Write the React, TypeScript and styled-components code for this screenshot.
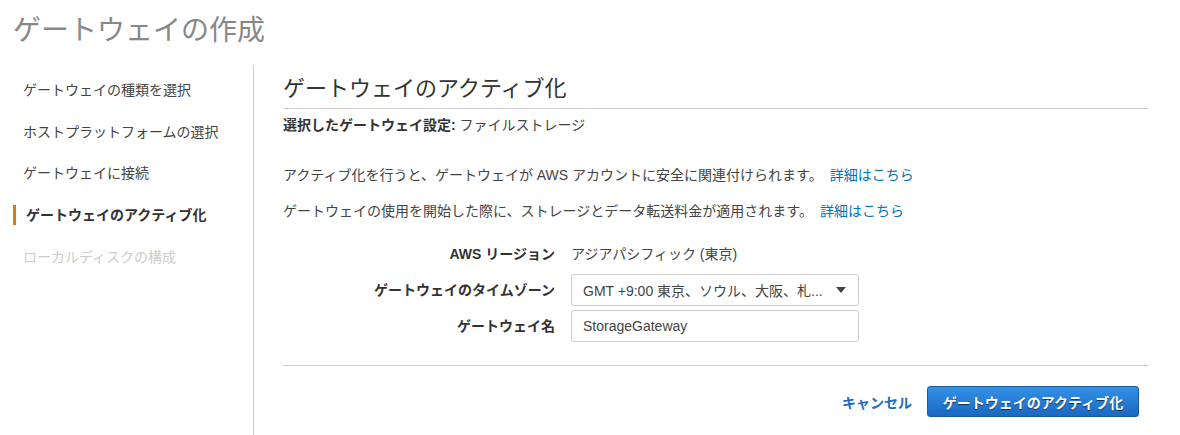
import React from "react";
import styled, { createGlobalStyle } from "styled-components";

const Global = createGlobalStyle`
  html, body { margin: 0; padding: 0; background: #fff; }
  body {
    font-family: "Liberation Sans", "Noto Sans CJK JP", sans-serif;
    font-size: 14px;
    color: #444;
  }
  * { box-sizing: border-box; }
`;

const Page = styled.div`
  width: 1180px;
  height: 435px;
  overflow: hidden;
`;

const Title = styled.h1`
  margin: 0;
  padding: 14px 0 0 13px;
  font-size: 28px;
  line-height: 34px;
  font-weight: 400;
  color: #888;
  height: 65px;
`;

const Body = styled.div`
  display: flex;
  height: 370px;
`;

const Sidebar = styled.nav`
  width: 254px;
  flex: none;
  border-right: 1px solid #ccc;
  padding-top: 4px;
  display: flex;
  flex-direction: column;
`;

const NavItem = styled.div<{ $state?: "active" | "disabled" }>`
  height: 41.75px;
  display: flex;
  align-items: center;
  padding-left: ${(p) => (p.$state === "active" ? "13px" : "23px")};
  font-size: 14px;
  line-height: 20px;
  color: ${(p) => (p.$state === "disabled" ? "#ccc" : p.$state === "active" ? "#333" : "#444")};
  font-weight: ${(p) => (p.$state === "active" ? 700 : 400)};
`;

const ActiveBar = styled.span`
  width: 3px;
  height: 20px;
  background: #e07b00;
  margin-right: 10px;
`;

const Main = styled.main`
  width: 894px;
  padding-left: 29px;
  display: flex;
  flex-direction: column;
`;

const Heading = styled.h2`
  margin: 0;
  margin-top: 9px;
  font-size: 22px;
  line-height: 30px;
  font-weight: 400;
  color: #333;
  padding-bottom: 4px;
  border-bottom: 1px solid #ccc;
`;

const Selected = styled.div`
  margin-top: 6px;
  line-height: 20px;
  color: #444;
  b { color: #333; font-weight: 700; }
`;

const Para = styled.p<{ $top: number }>`
  margin: ${(p) => p.$top}px 0 0;
  line-height: 20px;
  color: #444;
`;

const Link = styled.a`
  color: #0073bb;
  text-decoration: none;
  margin-left: 7px;
`;

const Form = styled.div`
  margin-top: 17px;
  display: grid;
  grid-template-columns: 272px 288px;
  column-gap: 16px;
  row-gap: 4px;
  align-items: center;
`;

const Label = styled.div`
  text-align: right;
  font-weight: 700;
  color: #333;
  height: 32px;
  line-height: 32px;
`;

const Value = styled.div`
  height: 32px;
  line-height: 32px;
  color: #444;
`;

const Select = styled.div`
  height: 32px;
  border: 1px solid #ccc;
  border-radius: 3px;
  display: flex;
  align-items: center;
  padding: 0 12px 0 11px;
  color: #444;
  justify-content: space-between;
`;

const Arrow = styled.span`
  width: 0;
  height: 0;
  border-left: 5px solid transparent;
  border-right: 5px solid transparent;
  border-top: 6px solid #444;
`;

const Input = styled.div`
  height: 32px;
  border: 1px solid #ccc;
  border-radius: 3px;
  display: flex;
  align-items: center;
  padding: 0 11px;
  color: #444;
`;

const Divider = styled.hr`
  margin: 23px 0 0;
  border: 0;
  border-top: 1px solid #ccc;
  height: 0;
`;

const Actions = styled.div`
  display: flex;
  justify-content: flex-end;
  align-items: center;
  gap: 15px;
  margin-top: 20px;
  padding-right: 9px;
`;

const Cancel = styled.a`
  color: #1c6bbf;
  font-weight: 700;
  text-decoration: none;
`;

const Primary = styled.button`
  height: 31px;
  width: 212px;
  border: 1px solid #1b5a9f;
  border-radius: 3px;
  background: linear-gradient(#3592e6, #1a67c2);
  color: #fff;
  font-family: inherit;
  font-size: 14px;
  font-weight: 700;
  text-shadow: 0 1px 1px rgba(0, 0, 0, 0.6);
  padding: 0;
`;

const steps: { label: string; state?: "active" | "disabled" }[] = [
  { label: "ゲートウェイの種類を選択" },
  { label: "ホストプラットフォームの選択" },
  { label: "ゲートウェイに接続" },
  { label: "ゲートウェイのアクティブ化", state: "active" },
  { label: "ローカルディスクの構成", state: "disabled" },
];

export default function App() {
  return (
    <Page>
      <Global />
      <Title>ゲートウェイの作成</Title>
      <Body>
        <Sidebar>
          {steps.map((s) => (
            <NavItem key={s.label} $state={s.state}>
              {s.state === "active" && <ActiveBar />}
              {s.label}
            </NavItem>
          ))}
        </Sidebar>
        <Main>
          <Heading>ゲートウェイのアクティブ化</Heading>
          <Selected>
            <b>選択したゲートウェイ設定:</b> ファイルストレージ
          </Selected>
          <Para $top={30}>
            アクティブ化を行うと、ゲートウェイが AWS アカウントに安全に関連付けられます。
            <Link href="#">詳細はこちら</Link>
          </Para>
          <Para $top={16}>
            ゲートウェイの使用を開始した際に、ストレージとデータ転送料金が適用されます。
            <Link href="#">詳細はこちら</Link>
          </Para>
          <Form>
            <Label>AWS リージョン</Label>
            <Value>アジアパシフィック (東京)</Value>
            <Label>ゲートウェイのタイムゾーン</Label>
            <Select>
              <span>GMT +9:00 東京、ソウル、大阪、札...</span>
              <Arrow />
            </Select>
            <Label>ゲートウェイ名</Label>
            <Input>StorageGateway</Input>
          </Form>
          <Divider />
          <Actions>
            <Cancel href="#">キャンセル</Cancel>
            <Primary>ゲートウェイのアクティブ化</Primary>
          </Actions>
        </Main>
      </Body>
    </Page>
  );
}
